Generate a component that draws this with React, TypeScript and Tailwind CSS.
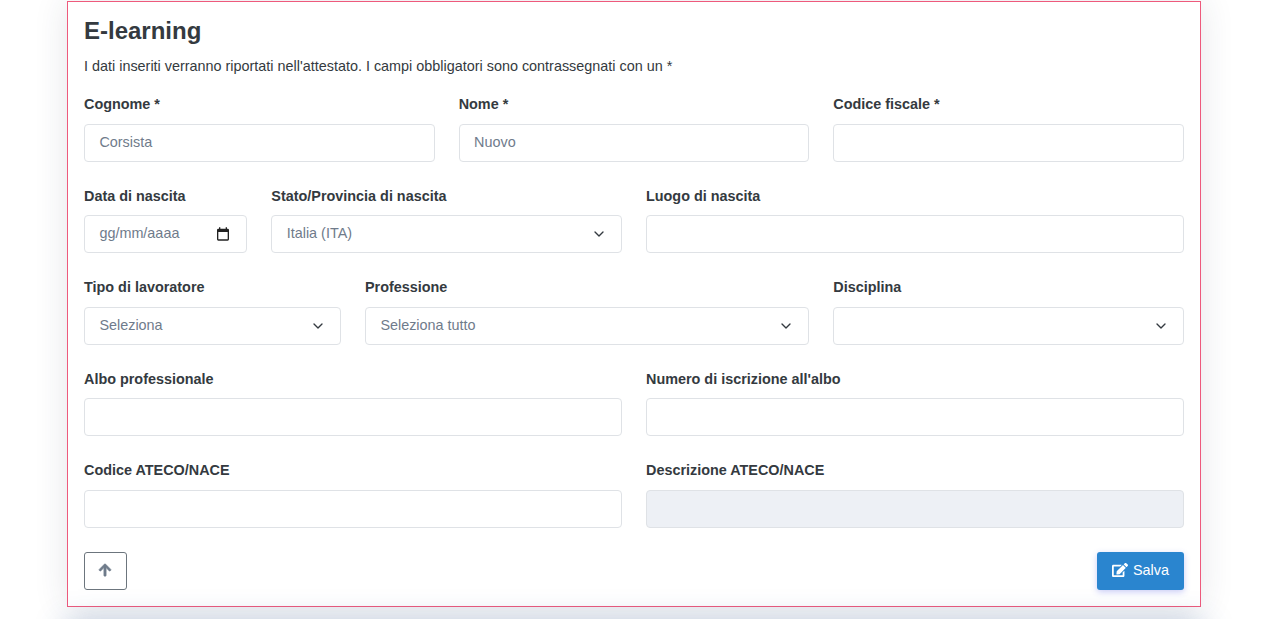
import React from 'react';
import { FaArrowUp, FaEdit } from 'react-icons/fa';
import { ChevronDown } from 'lucide-react';

const inputCls =
  'w-full h-[38px] rounded-[4px] border border-[#dfe2e6] px-[14.4px] text-[14.4px] text-[#6f7b8b] placeholder:text-[#6f7b8b] outline-none';
const textCls = `${inputCls} pb-[2px] bg-white`;

function Field({ label, span, children }: { label: string; span: string; children: React.ReactNode }) {
  return (
    <div className={`${span} pb-[24px]`}>
      <label className="block mb-[8px] text-[14.4px] leading-[21.6px] font-bold text-[#343a40]">{label}</label>
      {children}
    </div>
  );
}

function Select({ value }: { value: string }) {
  return (
    <div className="relative">
      <select defaultValue={value} className={`${inputCls} bg-white appearance-none`}>
        <option value={value}>{value}</option>
      </select>
      <ChevronDown className="absolute right-[15px] top-[11px] w-4 h-4 text-[#343a40] pointer-events-none" strokeWidth={2} />
    </div>
  );
}

export default function App() {
  return (
    <div className="h-[619px] overflow-hidden bg-white font-['Liberation_Sans',Arial,sans-serif]">
      <div className="ml-[67px] w-[1134px] pt-px">
        <div className="border border-[#ee5a7c] bg-white px-[16px] pt-[11px] h-[606px] shadow-[0_0_32px_rgba(40,50,70,0.12)]">
          <h2 className="text-[24px] leading-[36px] font-bold text-[#343a40]">E-learning</h2>
          <p className="mt-[7px] mb-[16.4px] text-[14.4px] leading-[21.6px] text-[#343a40]">
            I dati inseriti verranno riportati nell'attestato. I campi obbligatori sono contrassegnati con un *
          </p>

          <div className="grid grid-cols-12 gap-x-6">
            <Field label="Cognome *" span="col-span-4"><input className={textCls} placeholder="Corsista" /></Field>
            <Field label="Nome *" span="col-span-4"><input className={textCls} placeholder="Nuovo" /></Field>
            <Field label="Codice fiscale *" span="col-span-4"><input className={textCls} /></Field>

            <Field label="Data di nascita" span="col-span-2">
              <div className="relative">
                <input className={textCls} placeholder="gg/mm/aaaa" />
                <svg viewBox="0 0 24 24" className="absolute right-[16px] top-[11px] w-4 h-4 text-[#222]" fill="currentColor">
                  <path d="M19 4h-1V2h-2v2H8V2H6v2H5a2 2 0 0 0-2 2v14a2 2 0 0 0 2 2h14a2 2 0 0 0 2-2V6a2 2 0 0 0-2-2zm0 16H5V9h14v11z" />
                </svg>
              </div>
            </Field>
            <Field label="Stato/Provincia di nascita" span="col-span-4"><Select value="Italia (ITA)" /></Field>
            <Field label="Luogo di nascita" span="col-span-6"><input className={textCls} /></Field>

            <Field label="Tipo di lavoratore" span="col-span-3"><Select value="Seleziona" /></Field>
            <Field label="Professione" span="col-span-5"><Select value="Seleziona tutto" /></Field>
            <Field label="Disciplina" span="col-span-4"><Select value="" /></Field>

            <Field label="Albo professionale" span="col-span-6"><input className={textCls} /></Field>
            <Field label="Numero di iscrizione all'albo" span="col-span-6"><input className={textCls} /></Field>

            <Field label="Codice ATECO/NACE" span="col-span-6"><input className={textCls} /></Field>
            <Field label="Descrizione ATECO/NACE" span="col-span-6"><input className={`${inputCls} bg-[#edf0f5]`} disabled /></Field>
          </div>

          <div className="flex justify-between">
            <button className="w-[43px] h-[38px] rounded-[3px] border border-[#6c757d] flex items-center justify-center pb-[2px] pr-[2px] text-[#6f7b8b]">
              <FaArrowUp className="w-[14px] h-[14px] stroke-[24px]" />
            </button>
            <button className="h-[38px] w-[87px] rounded-[3px] bg-[#2a85cf] text-white text-[14.4px] flex items-center gap-[5px] pl-[15px] pb-[1px] shadow-[0_2px_6px_rgba(80,90,230,0.3)]">
              <FaEdit className="w-4 h-4" />
              Salva
            </button>
          </div>
        </div>
        <div className="mt-[18px] h-[100px] bg-white shadow-[0_0_30px_rgba(50,90,150,0.4)]" />
      </div>
    </div>
  );
}
